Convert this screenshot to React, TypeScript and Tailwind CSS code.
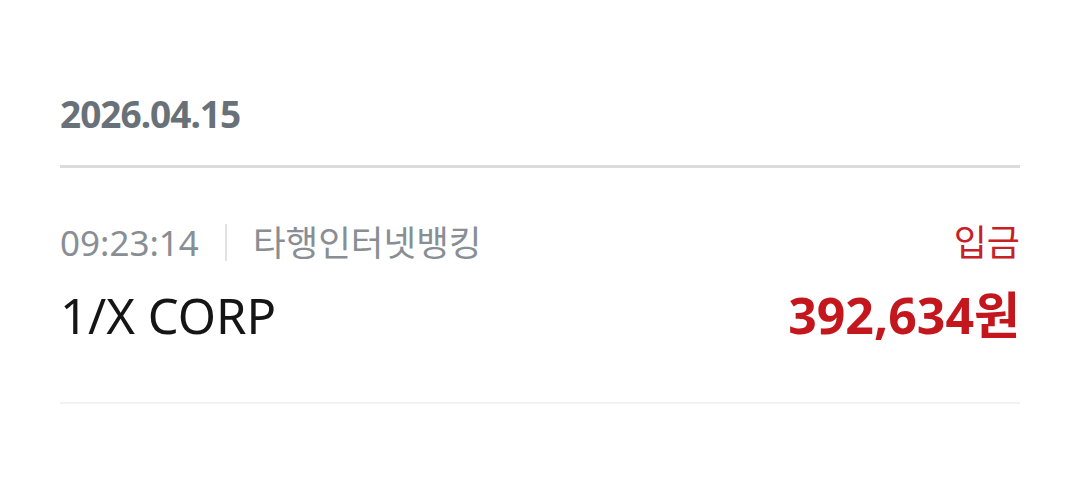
export default function App() {
  return (
    <div
      className="w-[1080px] h-[497px] bg-white px-[60px]"
      style={{ fontFamily: '"Noto Sans", "Noto Sans CJK KR", sans-serif' }}
    >
      <div className="h-[165px] pt-[89px]">
        <div className="h-[50px] text-[37px] leading-[50px] font-bold text-[#697178] tracking-[-1px]">2026.04.15</div>
      </div>
      <div className="h-[3px] bg-[#d9dcdf]" />
      <div className="pt-[52px]">
        <div className="h-[46px] flex justify-between items-baseline">
          <div className="flex items-baseline text-[35px] leading-[44px] text-[#888e93]">
            <span>09:23:14</span>
            <span className="mx-[26px] w-[2px] h-[37px] bg-[#e0e3e5] self-center" />
            <span className="text-[35.5px]">타행인터넷뱅킹</span>
          </div>
          <div className="text-[36px] leading-[44px] text-[#c52127]">입금</div>
        </div>
        <div className="mt-[19px] h-[60px] flex justify-between items-baseline">
          <div className="text-[49px] leading-[60px] text-[#151515]">1/X CORP</div>
          <div className="text-[50px] leading-[60px] font-bold text-[#c4171d]">392,634원</div>
        </div>
      </div>
      <div className="mt-[57px] h-[2px] bg-[#f0f2f4]" />
    </div>
  );
}
